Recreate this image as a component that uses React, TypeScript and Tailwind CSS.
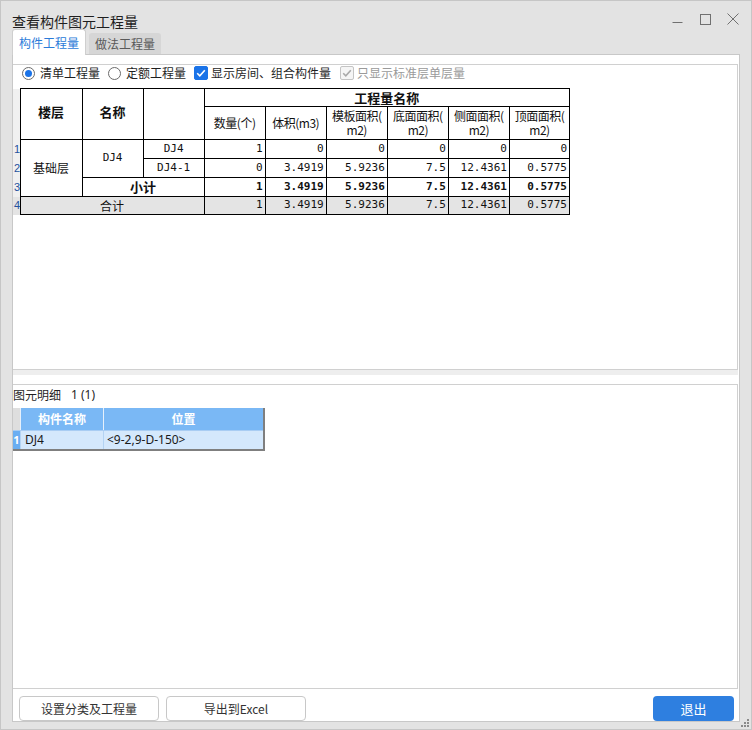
import React from "react";

// ─── Fonts ───────────────────────────────────────────────────────────────────
const CJK = "font-['Noto_Sans_CJK_SC',sans-serif]";
const NUM = "font-['DejaVu_Sans_Mono','Noto_Sans_CJK_SC',monospace] text-[11px]";
const UI = "font-['Noto_Sans','Noto_Sans_CJK_SC',sans-serif]";

const QTY_HEAD = [
  "数量(个)",
  "体积(m3)",
  "模板面积(\nm2)",
  "底面面积(\nm2)",
  "侧面面积(\nm2)",
  "顶面面积(\nm2)",
];

const ROW1 = ["1", "0", "0", "0", "0", "0"];
const ROW2 = ["0", "3.4919", "5.9236", "7.5", "12.4361", "0.5775"];
const SUB = ["1", "3.4919", "5.9236", "7.5", "12.4361", "0.5775"];
const TOTAL = ["1", "3.4919", "5.9236", "7.5", "12.4361", "0.5775"];

const cell = "border border-black p-0";
const rowNo = "p-0 pl-[1px] text-left align-middle text-[11px] font-['Liberation_Sans',sans-serif] text-[#24529e]";

function Nums({ vals, bold, gray }: { vals: string[]; bold?: boolean; gray?: boolean }) {
  return (
    <>
      {vals.map((v, i) => (
        <td key={i}
          className={`${cell} ${NUM} text-right pr-[2px] ${bold ? "font-bold" : ""} ${gray ? "bg-[#e4e4e4]" : ""}`}>
          {v}
        </td>
      ))}
    </>
  );
}

function Radio({ on }: { on?: boolean }) {
  return (
    <span className="w-[13px] h-[13px] rounded-full border border-[#6b6b6b] bg-white flex items-center justify-center shrink-0">
      {on && <span className="w-[7px] h-[7px] rounded-full bg-[#1a73e8]" />}
    </span>
  );
}

function Check({ disabled }: { disabled?: boolean }) {
  return (
    <span className={`w-[14px] h-[14px] rounded-[2px] flex items-center justify-center shrink-0 border ${disabled ? "border-[#c4c4c4] bg-[#f5f5f5]" : "border-[#1a73e8] bg-[#1a73e8]"}`}>
      <svg width="12" height="12" viewBox="0 0 12 12">
        <path d="M2.2 6.2 L4.8 8.8 L9.8 3.2" fill="none" stroke={disabled ? "#a9a9a9" : "#ffffff"} strokeWidth="1.6" />
      </svg>
    </span>
  );
}

export default function App() {
  return (
    <div className={`relative w-[752px] h-[730px] bg-[#e3e3e3] border border-[#c6c6c6] flex flex-col ${CJK} text-[12px] text-[#222]`}>
      {/* ── Title bar ── */}
      <div className="h-[28px] flex items-start">
        <div className="pl-[11px] pt-[11px] text-[14px] leading-[18px] text-[#1f1f1f]">查看构件图元工程量</div>
        <div className="ml-auto mr-[4px] flex">
          <div className="w-[28px] h-[28px] pt-[8px] flex items-center justify-center">
            <svg width="11" height="11" viewBox="0 0 11 11"><path d="M0.5 8.5 H10.5" stroke="#707070" strokeWidth="1" /></svg>
          </div>
          <div className="w-[28px] h-[28px] pt-[8px] flex items-center justify-center">
            <svg width="11" height="11" viewBox="0 0 11 11"><rect x="0.5" y="0.5" width="10" height="10" fill="none" stroke="#707070" strokeWidth="1" /></svg>
          </div>
          <div className="w-[28px] h-[28px] pt-[8px] flex items-center justify-center">
            <svg width="12" height="12" viewBox="0 0 12 12"><path d="M0.5 0.5 L11.5 11.5 M11.5 0.5 L0.5 11.5" stroke="#707070" strokeWidth="1" /></svg>
          </div>
        </div>
      </div>

      {/* ── Tabs ── */}
      <div className="h-[25px] flex items-end pl-[11px]">
        <div className="relative z-10 -mb-px w-[74px] h-[26px] bg-white border border-b-0 border-[#cfcfcf] rounded-t-[3px] flex items-center justify-center text-[#2b7bd9]">
          构件工程量
        </div>
        <div className="ml-[3px] w-[72px] h-[21px] bg-[#d6d6d6] rounded-t-[3px] flex items-center justify-center text-[#595959]">
          做法工程量
        </div>
      </div>

      {/* ── Tab page ── */}
      <div className="ml-[11px] w-[728px] h-[668px] bg-white border border-[#c8c8c8] flex flex-col pt-[9px]">
        {/* Top panel */}
        <div className="w-[725px] h-[306px] border-t border-r border-b border-[#d0d0d0] flex flex-col">
          <div className="h-[16px] mb-[7px] flex items-center pl-[9px] text-[12px] leading-[16px]">
            <Radio on />
            <span className="ml-[5px] text-[#1f1f1f]">清单工程量</span>
            <span className="ml-[8px]"><Radio /></span>
            <span className="ml-[5px] text-[#1f1f1f]">定额工程量</span>
            <span className="ml-[8px]"><Check /></span>
            <span className="ml-[3px] text-[#1f1f1f]">显示房间、组合构件量</span>
            <span className="ml-[9px]"><Check disabled /></span>
            <span className="ml-[3px] text-[#9a9a9a]">只显示标准层单层量</span>
          </div>

          <table className="border-collapse table-fixed w-[557px] text-[#111]">
            <colgroup>
              <col className="w-[7px]" />
              <col className="w-[62px]" />
              <col className="w-[61px]" />
              <col className="w-[61px]" />
              <col className="w-[61px]" />
              <col className="w-[61px]" />
              <col className="w-[61px]" />
              <col className="w-[61px]" />
              <col className="w-[61px]" />
              <col className="w-[60px]" />
            </colgroup>
            <tbody>
              <tr className="h-[18px]">
                <td rowSpan={2} className="p-0 bg-[#f0f0f0]" />
                <td rowSpan={2} className={`${cell} text-center font-bold text-[13px] leading-[16px] pb-[4px]`}>楼层</td>
                <td rowSpan={2} className={`${cell} text-center font-bold text-[13px] leading-[16px] pb-[4px]`}>名称</td>
                <td rowSpan={2} className={cell} />
                <td colSpan={6} className={`${cell} text-center font-bold text-[13px] leading-[16px]`}>工程量名称</td>
              </tr>
              <tr className="h-[33px]">
                {QTY_HEAD.map((t, i) => (
                  <td key={i} className={`${cell} text-center text-[12px] leading-[14px] tracking-[-0.5px] whitespace-pre overflow-hidden`}>
                    {t}
                  </td>
                ))}
              </tr>
              <tr className="h-[19px]">
                <td className={`${rowNo} bg-[#f0f0f0]`}>1</td>
                <td rowSpan={3} className={`${cell} text-center text-[12px]`}>基础层</td>
                <td rowSpan={2} className={`${cell} text-center ${NUM}`}>DJ4</td>
                <td className={`${cell} text-center ${NUM}`}>DJ4</td>
                <Nums vals={ROW1} />
              </tr>
              <tr className="h-[19px]">
                <td className={`${rowNo} bg-[#f0f0f0]`}>2</td>
                <td className={`${cell} text-center ${NUM}`}>DJ4-1</td>
                <Nums vals={ROW2} />
              </tr>
              <tr className="h-[19px]">
                <td className={`${rowNo} bg-[#f0f0f0]`}>3</td>
                <td colSpan={2} className={`${cell} text-center font-bold text-[13px] leading-[16px]`}>小计</td>
                <Nums vals={SUB} bold />
              </tr>
              <tr className="h-[18px]">
                <td className={`${rowNo} bg-[#e4e4e4]`}>4</td>
                <td colSpan={3} className={`${cell} text-center text-[12px] leading-[16px] bg-[#e4e4e4]`}>合计</td>
                <Nums vals={TOTAL} gray />
              </tr>
            </tbody>
          </table>
        </div>

        {/* Splitter */}
        <div className="w-[725px] h-[5px] bg-[#eeeeee]" />
        <div className="h-[9px]" />

        {/* Lower panel */}
        <div className="w-[725px] h-[305px] border-t border-r border-b border-[#d0d0d0] flex flex-col">
          <div className="h-[23px] pt-[1px] leading-[18px] text-[#1f1f1f] flex">
            <span>图元明细</span>
            <span className={`ml-[10px] ${UI} text-[12px]`}>1 (1)</span>
          </div>
          <div className={`w-[252px] border-r-2 border-b-2 border-[#7f7f7f] flex flex-col ${UI}`}>
            <div className="h-[22px] flex">
              <div className="w-[7px] bg-[#dedede]" />
              <div className={`w-[83px] border-l border-[#e6f0fb] bg-[#7ab8f5] text-white font-bold text-[12px] ${CJK} flex items-center justify-center`}>构件名称</div>
              <div className={`w-[160px] border-l border-[#e6f0fb] bg-[#7ab8f5] text-white font-bold text-[12px] ${CJK} flex items-center justify-center`}>位置</div>
            </div>
            <div className="h-[19px] flex border-t border-[#a9cdf3]">
              <div className="w-[7px] bg-[#6aaef2] text-white text-[11px] font-bold flex items-center justify-center">1</div>
              <div className="w-[83px] border-l border-[#b3d3f3] bg-[#d4e8fc] pl-[4px] text-[12px] text-[#1a1a1a] flex items-center">DJ4</div>
              <div className="w-[160px] border-l border-[#b3d3f3] bg-[#d4e8fc] pl-[3px] text-[12px] text-[#1a1a1a] flex items-center">&lt;9-2,9-D-150&gt;</div>
            </div>
          </div>
        </div>

        {/* Buttons */}
        <div className="h-[32px] pt-[7px] flex">
          <button className="ml-[6px] w-[140px] h-[25px] rounded-[4px] border border-[#c8c8c8] bg-white text-[12px] text-[#333]">设置分类及工程量</button>
          <button className="ml-[7px] w-[140px] h-[25px] rounded-[4px] border border-[#c8c8c8] bg-white text-[12px] text-[#333]">导出到Excel</button>
          <button className="ml-auto mr-[5px] w-[81px] h-[25px] rounded-[4px] bg-[#2e7fe0] text-[13px] text-white">退出</button>
        </div>
      </div>

      {/* Resize grip */}
      <svg className="absolute right-[2px] bottom-[2px]" width="9" height="9" viewBox="0 0 9 9">
        <rect x="7" y="1" width="2" height="2" fill="#8a8a8a" />
        <rect x="4" y="4" width="2" height="2" fill="#8a8a8a" />
        <rect x="7" y="4" width="2" height="2" fill="#8a8a8a" />
        <rect x="1" y="7" width="2" height="2" fill="#8a8a8a" />
        <rect x="4" y="7" width="2" height="2" fill="#8a8a8a" />
        <rect x="7" y="7" width="2" height="2" fill="#8a8a8a" />
      </svg>
    </div>
  );
}
